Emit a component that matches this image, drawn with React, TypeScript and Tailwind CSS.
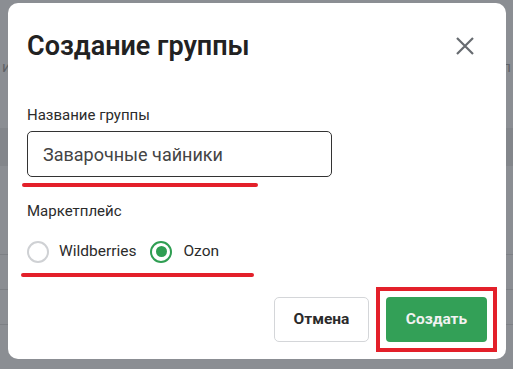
export default function App() {
  return (
    <div className="relative w-[513px] h-[369px] overflow-hidden bg-[#8b8e93] font-['Roboto',sans-serif]">
      {/* backdrop page, dimmed */}
      <div className="flex flex-col pt-[52px] text-[#5f6267] text-[15px]">
        <div className="flex h-[76px] justify-between px-[2px] pt-[4px]">
          <span>их</span>
          <span>п</span>
        </div>
        <div className="h-[38px] bg-[#83868b]" />
        <div className="h-[88px]" />
        <div className="h-[35px] border-t border-[#7d8085]" />
        <div className="h-[35px] border-t border-[#7d8085]" />
        <div className="h-[35px] border-t border-[#7d8085]" />
      </div>

      {/* dialog */}
      <div className="absolute left-[8px] top-[3px] flex h-[356px] w-[498px] flex-col rounded-[10px] bg-white pl-[19px] pr-[9px]">
        <div className="flex items-center justify-between pt-[27px]">
          <h2 className="text-[27px] font-semibold leading-[32px] text-[#222]">Создание группы</h2>
          <button className="mr-[23px] text-[#676b70]">
            <svg width="18" height="18" viewBox="0 0 18 18" fill="none" stroke="currentColor" strokeWidth="2.2">
              <path d="M1 1l16 16M17 1L1 17" />
            </svg>
          </button>
        </div>

        <label className="mt-[43px] text-[15px] leading-[20px] text-[#2b2b2b]">Название группы</label>
        <div className="mt-[6px] flex h-[46px] w-[305px] items-center rounded-[5px] border-[1.5px] border-[#333] pl-[15px] text-[18px] text-[#444]">
          Заварочные чайники
        </div>
        <div className="ml-[-5px] mt-[6px] h-[4px] w-[236px] rounded-full bg-[#e3202a]" />

        <span className="mt-[14px] text-[15px] leading-[20px] text-[#2b2b2b]">Маркетплейс</span>
        <div className="mt-[19px] flex items-center text-[15.5px] text-[#2b2b2b]">
          <span className="h-[22px] w-[22px] rounded-full border-2 border-[#cfd1d4]" />
          <span className="ml-[10px]">Wildberries</span>
          <span className="ml-[14px] flex h-[22px] w-[22px] items-center justify-center rounded-full border-2 border-[#2f9e52]">
            <span className="h-[11px] w-[11px] rounded-full bg-[#2f9e52]" />
          </span>
          <span className="ml-[11px]">Ozon</span>
        </div>
        <div className="ml-[-6px] mt-[10px] h-[4px] w-[233px] rounded-full bg-[#e3202a]" />

        <div className="mt-[10px] flex items-center justify-end">
          <button className="h-[45px] w-[95px] rounded-[5px] border border-[#d4d6d9] text-[15.5px] font-bold text-[#2b2b2b]">
            Отмена
          </button>
          <div className="ml-[7px] border-4 border-[#e3202a] p-[6px]">
            <button className="h-[45px] w-[101px] rounded-[4px] bg-[#33a057] text-[15.5px] font-bold text-[#f2f2f2]">
              Создать
            </button>
          </div>
        </div>
      </div>
    </div>
  )
}
